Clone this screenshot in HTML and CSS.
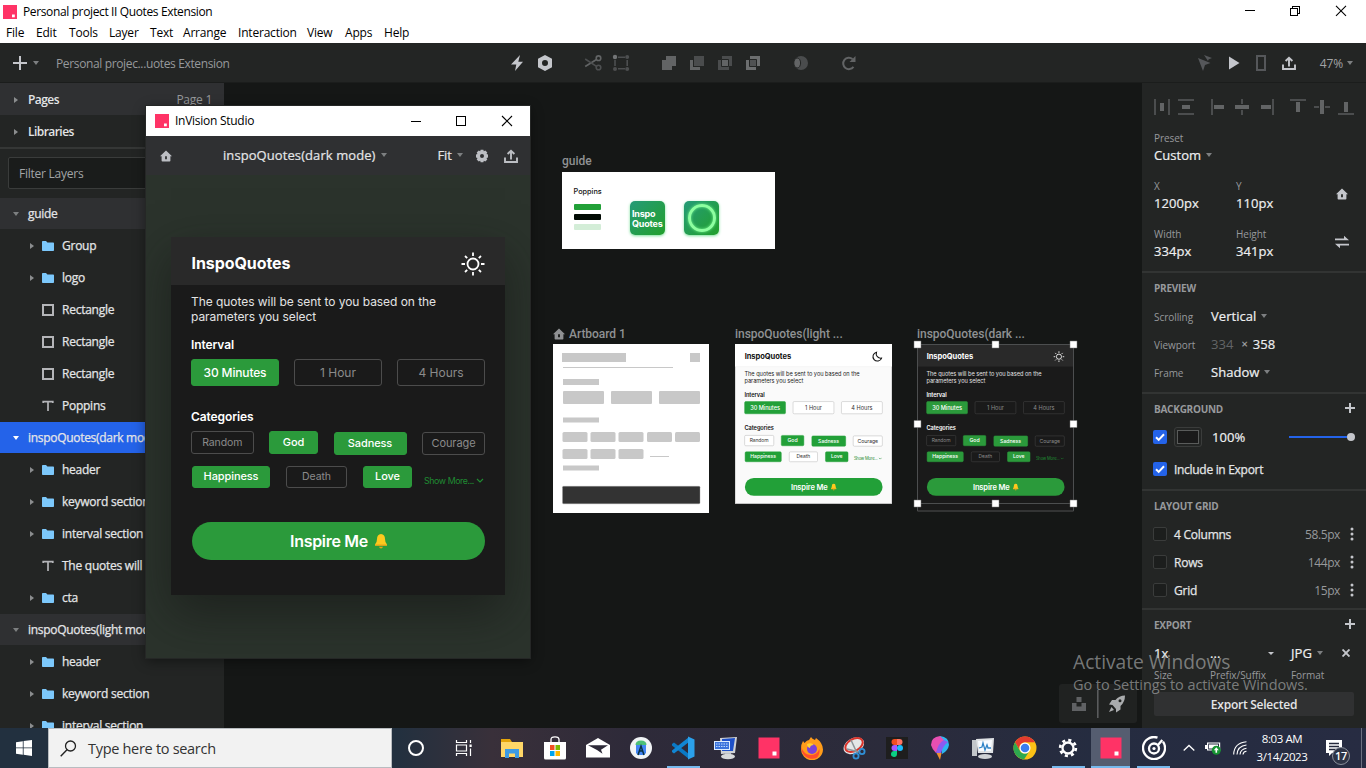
FILE: index.html
```html
<!DOCTYPE html>
<html lang="en">
<head>
<meta charset="utf-8">
<title>Personal project II Quotes Extension</title>
<link rel="stylesheet" href="styles.css">
</head>
<body>
<svg class="defs" aria-hidden="true">
  <defs>
    <symbol id="folder" viewBox="0 0 12 10"><path fill="#7cc8fb" d="M0 .8Q0 0 .8 0H4l1.4 1.5H11.200q.8 0 .8.8V9.200q0 .8-.8.8H.8Q0 10 0 9.200z"/></symbol>
    <symbol id="rect" viewBox="0 0 12 12"><rect x="1" y="1" width="10" height="10" fill="none" stroke="#b4b5b8" stroke-width="2"/></symbol>
    <symbol id="type" viewBox="0 0 12 12"><path fill="none" stroke="#b4b5b8" stroke-width="1.700" d="M1.200 3V1.700h9.600V3M6 2v9"/></symbol>
    <symbol id="home" viewBox="0 0 12 12"><path fill="currentColor" fill-rule="evenodd" d="M6 .4 12 6.200h-1.600v4.600q0 .8-.8.8H2.400q-.8 0-.8-.8V6.200H0zM5.100 6.300v2.900h1.800V6.300z"/></symbol>
    <symbol id="share" viewBox="0 0 14 14"><path fill="none" stroke="currentColor" stroke-width="1.900" d="M1 8.500V13h12V8.500M7 10.500V2M3.600 5 7 1.700 10.400 5"/></symbol>
    <symbol id="plus" viewBox="0 0 10 10"><path stroke="currentColor" stroke-width="2" d="M5 0v10M0 5h10"/></symbol>
    <symbol id="plus-lg" viewBox="0 0 14 14"><path stroke="currentColor" stroke-width="2" d="M7 0v14M0 7h14"/></symbol>
    <symbol id="logo" viewBox="0 0 14 14"><path fill="#ff3366" d="M0 0h14v14H0z"/><path fill="#fff" d="M9 9.500h2.800v2.800H9z"/></symbol>
    <symbol id="check" viewBox="0 0 14 14"><path fill="none" stroke="#fff" stroke-width="2" d="m3 7.200 2.700 2.700L11 4.300"/></symbol>
    <symbol id="dots" viewBox="0 0 4 14"><circle cx="2" cy="2" r="1.500"/><circle cx="2" cy="7" r="1.500"/><circle cx="2" cy="12" r="1.500"/></symbol>
    <symbol id="sun" viewBox="0 0 24 24"><g fill="none" stroke="currentColor" stroke-width="1.800"><circle cx="12" cy="12" r="5.500"/><path d="M12 .5v3.500M12 20v3.500M.5 12H4M20 12h3.500M4 4l2.200 2.200M17.800 17.800 20 20M4 20l2.200-2.200M17.800 6.200 20 4"/></g></symbol>
    <symbol id="moon" viewBox="0 0 24 24"><path fill="none" stroke="currentColor" stroke-width="2.300" d="M11 2.500A9.500 9.500 0 1 0 22 15 9.600 9.600 0 0 1 11 2.500z"/></symbol>
    <symbol id="bell" viewBox="0 0 12 15"><path fill="#fdc91e" d="M6 0q4 .3 4 5 0 3.500 2 5.500v1H0v-1Q2 8.500 2 5q0-4.700 4-5z"/><path fill="#e8a317" d="M0 10.500h12v1.300H0zM4 12.700h4q-.5 1.800-2 1.800t-2-1.800z"/></symbol>
    <symbol id="chev" viewBox="0 0 8 5"><path fill="none" stroke="currentColor" stroke-width="1.200" d="m1 1 3 3 3-3"/></symbol>
  </defs>
</svg>

<header class="titlebar">
  <div class="title"><svg class="app-logo"><use href="#logo"/></svg><span>Personal project II Quotes Extension</span>
    <svg class="win-ctl" viewBox="0 0 110 12" width="110" height="12"><g fill="none" stroke="#000" shape-rendering="crispEdges"><path d="M2 5.500h10M47.500 3.500h7v7h-7zM49.500 3.500v-2h7v7h-2"/></g><path stroke="#000" stroke-width="1.100" d="m93 .8 10 10M103 .8l-10 10"/></svg>
  </div>
  <nav class="menu"><span>File</span><span>Edit</span><span>Tools</span><span>Layer</span><span>Text</span><span>Arrange</span><span>Interaction</span><span>View</span><span>Apps</span><span>Help</span></nav>
</header>

<div class="toolbar">
  <div class="tb-left"><svg class="tb-plus"><use href="#plus-lg"/></svg><i class="caret"></i><span class="docname">Personal projec...uotes Extension</span></div>
  <svg class="tb-mid" viewBox="0 0 350 20" width="350" height="20">
    <path fill="#c4c6cb" d="M10 2 1 11.500h5.300L5 18l8-9.300H8.300z"/>
    <path fill="#c4c6cb" fill-rule="evenodd" d="m35 2 7 3.800v8.400L35 18l-7-3.800V5.800zm0 5a3 3 0 1 0 0 6 3 3 0 0 0 0-6z"/>
    <g fill="none" stroke="#626465" stroke-width="1.600"><circle cx="88.500" cy="5.200" r="2.300"/><circle cx="88.500" cy="14.500" r="2.300" stroke="#4d4f50"/><path d="m86.500 6.500-11.300 7"/><path stroke="#4d4f50" d="M86.500 13.300 75.200 6"/></g>
    <g fill="#4d4f50"><path d="M108 3.500h7v1.600h-7zM108 15h7v1.600h-7zM104.200 7h1.600v6h-1.600zM116.400 7h1.600v6h-1.600z"/><circle cx="117.200" cy="4" r="2"/><circle cx="105" cy="16" r="2"/><circle cx="117.200" cy="16" r="2"/><circle cx="105" cy="4" r="2.200" fill="#737577"/></g>
    <path fill="#626465" d="M156 3h10v10h-4v4h-10V7h4z"/>
    <path fill="#4a4c4d" d="M184 3h10v10h-10z"/><path fill="#626465" d="M180 7h3v7h7v3h-10z"/>
    <path fill="#4a4c4d" d="M212 3h10v10h-3v4h-11V7h4z"/><path fill="#626465" stroke="#232524" d="M211.500 6.500h7v7h-7z"/>
    <path fill="#6c6e6f" d="M240 3h10v10h-4v4h-10V7h4z"/><path fill="#505253" stroke="#232524" d="M239.500 6.500h7v7h-7z"/>
    <circle cx="291" cy="10" r="7" fill="#4a4c4d"/><ellipse cx="287.200" cy="10" rx="3.400" ry="5" fill="#626465" stroke="#232524"/>
    <path fill="none" stroke="#626465" stroke-width="2" d="M342.500 6A5.700 5.700 0 1 0 343.500 13.800"/><path fill="#626465" d="M345.500 3v6h-6z"/>
  </svg>
  <div class="tb-right">
    <svg viewBox="0 0 100 18" width="100" height="18"><path fill="#55575a" d="m0 4 12.500 5-5.500 2-2 6zM6 1l8 3-3.500 1.500L10 7z"/><path fill="#c4c6cb" d="M31 2.500 41.500 9 31 15.500z"/><path fill="none" stroke="#55575a" stroke-width="2" d="M59 2h8v14h-8z"/></svg>
    <svg class="tb-share"><use href="#share"/></svg>
    <span class="zoom">47%</span><i class="caret"></i>
  </div>
</div>

<main class="work">
  <aside class="layers">
    <div class="acc acc-on"><i class="tri"></i><b>Pages</b><span class="pg">Page 1</span></div>
    <div class="acc"><i class="tri"></i><b>Libraries</b></div>
    <div class="filter"><div class="filter-in">Filter Layers</div></div>
    <div class="row sec"><i class="caret"></i><span>guide</span></div>
    <div class="row"><i class="tri"></i><svg class="fo"><use href="#folder"/></svg><span>Group</span></div>
    <div class="row"><i class="tri"></i><svg class="fo"><use href="#folder"/></svg><span>logo</span></div>
    <div class="row leaf"><svg class="sq"><use href="#rect"/></svg><span>Rectangle</span></div>
    <div class="row leaf"><svg class="sq"><use href="#rect"/></svg><span>Rectangle</span></div>
    <div class="row leaf"><svg class="sq"><use href="#rect"/></svg><span>Rectangle</span></div>
    <div class="row leaf"><svg class="sq"><use href="#type"/></svg><span>Poppins</span></div>
    <div class="row sec selected"><i class="caret"></i><span>inspoQuotes(dark mode)</span></div>
    <div class="row"><i class="tri"></i><svg class="fo"><use href="#folder"/></svg><span>header</span></div>
    <div class="row"><i class="tri"></i><svg class="fo"><use href="#folder"/></svg><span>keyword section</span></div>
    <div class="row"><i class="tri"></i><svg class="fo"><use href="#folder"/></svg><span>interval section</span></div>
    <div class="row leaf"><svg class="sq"><use href="#type"/></svg><span>The quotes will be sent</span></div>
    <div class="row"><i class="tri"></i><svg class="fo"><use href="#folder"/></svg><span>cta</span></div>
    <div class="row sec"><i class="caret"></i><span>inspoQuotes(light mode)</span></div>
    <div class="row"><i class="tri"></i><svg class="fo"><use href="#folder"/></svg><span>header</span></div>
    <div class="row"><i class="tri"></i><svg class="fo"><use href="#folder"/></svg><span>keyword section</span></div>
    <div class="row"><i class="tri"></i><svg class="fo"><use href="#folder"/></svg><span>interval section</span></div>
  </aside>

  <section class="canvas">
    <div class="board b-guide"><div class="blabel">guide</div>
      <div class="guide">
        <div class="swatches"><span>Poppins</span><i class="s1"></i><i class="s2"></i><i class="s3"></i></div>
        <div class="tile">Inspo<br>Quotes</div>
        <div class="tile ring"><i></i></div>
      </div>
    </div>
    <div class="board b-wire"><div class="blabel"><svg class="bhome"><use href="#home"/></svg>Artboard 1</div>
      <svg viewBox="0 0 156 169" width="156" height="169"><path fill="#fff" d="M0 0h156v169H0z"/>
        <g fill="#c8c8c8"><path d="M9 9h64v9H9zM137 9h10v9h-10zM10 23h110v1H10zM10 35h36v6H10zM10 73.500h36v5H10zM10 121.500h36v5H10zM97 112h19v1H97z"/>
        <rect x="10" y="47" width="41" height="13" rx="1"/><rect x="58" y="47" width="41" height="13" rx="1"/><rect x="106" y="47" width="41" height="13" rx="1"/>
        <rect x="9.500" y="88" width="25" height="10" rx="1.500"/><rect x="37.500" y="88" width="25" height="10" rx="1.500"/><rect x="65.500" y="88" width="25" height="10" rx="1.500"/><rect x="94" y="88" width="25" height="10" rx="1.500"/><rect x="122" y="88" width="25" height="10" rx="1.500"/>
        <rect x="9.500" y="105" width="25" height="10" rx="1.500"/><rect x="37.500" y="105" width="25" height="10" rx="1.500"/><rect x="65.500" y="105" width="25" height="10" rx="1.500"/></g>
        <rect x="9.500" y="142.300" width="137.500" height="17.500" rx="1" fill="#333" stroke="#999" stroke-width=".4"/></svg>
    </div>
    <div class="board b-light"><div class="blabel">inspoQuotes(light ...</div>
      <div class="mini"><div class="card light">
        <div class="c-head"><span>InspoQuotes</span><svg class="c-mode"><use href="#moon"/></svg></div>
        <p class="c-text">The quotes will be sent to you based on the<br>parameters you select</p>
        <h4 class="c-h">Interval</h4>
        <div class="c-int"><span class="on">30 Minutes</span><span>1 Hour</span><span>4 Hours</span></div>
        <h4 class="c-h c-h2">Categories</h4>
        <div class="c-row"><span class="w62 sm">Random</span><span class="on w49">God</span><span class="on w73 dn">Sadness</span><span class="w63 dn">Courage</span></div>
        <div class="c-row c-row2"><span class="on w78">Happiness</span><span class="w61 sm">Death</span><span class="on w49">Love</span><em>Show More... <svg><use href="#chev"/></svg></em></div>
        <div class="c-cta">Inspire Me <svg><use href="#bell"/></svg></div>
      </div></div>
    </div>
    <div class="board b-dark"><div class="blabel">inspoQuotes(dark ...</div>
      <div class="mini"><div class="card">
        <div class="c-head"><span>InspoQuotes</span><svg class="c-mode"><use href="#sun"/></svg></div>
        <p class="c-text">The quotes will be sent to you based on the<br>parameters you select</p>
        <h4 class="c-h">Interval</h4>
        <div class="c-int"><span class="on">30 Minutes</span><span>1 Hour</span><span>4 Hours</span></div>
        <h4 class="c-h c-h2">Categories</h4>
        <div class="c-row"><span class="w62 sm">Random</span><span class="on w49">God</span><span class="on w73 dn">Sadness</span><span class="w63 dn">Courage</span></div>
        <div class="c-row c-row2"><span class="on w78">Happiness</span><span class="w61 sm">Death</span><span class="on w49">Love</span><em>Show More... <svg><use href="#chev"/></svg></em></div>
        <div class="c-cta">Inspire Me <svg><use href="#bell"/></svg></div>
      </div></div>
      <svg class="handles" viewBox="0 0 166 176" width="166" height="176"><path fill="none" stroke="#4c4e4f" d="M4.500 4.500h156v159h-156zM4.500 163v8h156v-8"/><g fill="#fff" stroke="#777" stroke-width=".5"><path d="M1 1h7v7H1zM79 1h7v7H79zM157 1h7v7H157zM1 80.500h7v7H1zM157 80.500h7v7H157zM1 160h7v7H1zM79 160h7v7H79zM157 160h7v7H157z"/></g></svg>
    </div>
    <div class="dock"><svg viewBox="0 0 78 39" width="78" height="39"><path fill="#606264" d="M17.500 13h5v5h-5zM13 19h4.500v3.500h5V19H27v8H13z"/><path fill="#5a5c5d" d="M38 6h1.600v28H38z"/><path fill="#aaacae" fill-rule="evenodd" d="M66 11.500q-6 0-9.500 4.500h-3.500L50 20.500l3.500.5 3.500 4v3.500l4.500-3V22Q66 18 66 11.500zm-5 3.800a1.500 1.500 0 1 1 0 3 1.500 1.500 0 0 1 0-3zM52.500 23 50 28l5-2z"/></svg></div>
  </section>

  <aside class="props">
    <div class="grp g-pos">
      <svg class="align" viewBox="0 0 200 16" width="200" height="16"><g fill="#4b4d4e"><path d="M0 0h2v16H0zM14 0h2v16h-2zM24 0h16v2H24zM24 14h16v2H24zM57 0h2v16h-2zM87 0h2v5h-2zM87 11h2v5h-2zM118 0h2v16h-2zM136 0h16v2h-16zM160 7h5v2h-5zM171 7h5v2h-5zM184 14h16v2h-16z"/></g><g fill="#626465"><path d="M6 4h4v8H6zM28 6h8v4h-8zM60 6h10v4H60zM81 6h14v4H81zM107 6h10v4h-10zM142 3h4v10h-4zM166 1h4v14h-4zM190 3h4v10h-4z"/></g></svg>
      <label>Preset</label><div class="val">Custom<i class="caret"></i></div>
      <div class="pair p1"><div><label>X</label><div class="val">1200px</div></div><div><label>Y</label><div class="val">110px</div></div><svg class="p-home"><use href="#home"/></svg></div>
      <div class="pair p2"><div><label>Width</label><div class="val">334px</div></div><div><label>Height</label><div class="val">341px</div></div><svg class="p-swap" viewBox="0 0 14 14"><path fill="#c4c6cb" d="M0 3.500h9V.8L14 5.300H0zM14 10.500H5v2.700L0 8.700h14z"/></svg></div>
    </div>
    <div class="grp g-prev"><h3>PREVIEW</h3>
      <div class="kv"><label>Scrolling</label><div class="val">Vertical<i class="caret"></i></div></div>
      <div class="kv"><label>Viewport</label><div class="val"><span class="dim">334</span><span class="x">×</span>358</div></div>
      <div class="kv"><label>Frame</label><div class="val">Shadow<i class="caret"></i></div></div>
    </div>
    <div class="grp g-bg"><h3>BACKGROUND<svg class="h-plus"><use href="#plus"/></svg></h3>
      <div class="bg1"><span class="cb on"><svg><use href="#check"/></svg></span><span class="well"><i></i></span><span class="val">100%</span><span class="slider"><i></i></span></div>
      <div class="bg2"><span class="cb on"><svg><use href="#check"/></svg></span><span class="opt inc">Include in Export</span></div>
    </div>
    <div class="grp g-grid"><h3>LAYOUT GRID</h3>
      <div class="lg"><span class="cb"></span><span class="opt">4 Columns</span><span class="num">58.5px</span><svg class="dots"><use href="#dots"/></svg></div>
      <div class="lg"><span class="cb"></span><span class="opt">Rows</span><span class="num">144px</span><svg class="dots"><use href="#dots"/></svg></div>
      <div class="lg"><span class="cb"></span><span class="opt">Grid</span><span class="num">15px</span><svg class="dots"><use href="#dots"/></svg></div>
    </div>
    <div class="grp g-exp"><h3>EXPORT<svg class="h-plus"><use href="#plus"/></svg></h3>
      <div class="ex val"><span>1x</span><span>...</span><i class="caret sm-c"></i><span>JPG<i class="caret"></i></span><svg viewBox="0 0 8 8" width="8" height="8"><path stroke="#c4c6cb" stroke-width="1.900" d="m.5.5 7 7m0-7-7 7"/></svg></div>
      <div class="exl"><label>Size</label><label>Prefix/Suffix</label><label>Format</label></div>
      <div class="btn">Export Selected</div>
    </div>
  </aside>
</main>

<div class="watermark"><div>Activate Windows</div><p>Go to Settings to activate Windows.</p></div>

<div class="popup">
  <div class="pop-title"><svg class="app-logo"><use href="#logo"/></svg><span>InVision Studio</span>
    <svg class="win-ctl" viewBox="0 0 102 12" width="102" height="12"><path fill="none" stroke="#000" shape-rendering="crispEdges" d="M0 6.500h10M45.500 1.500h9v9h-9z"/><path stroke="#000" stroke-width="1.100" d="m91 1 10 10M101 1 91 11"/></svg></div>
  <div class="pop-bar"><svg class="pb-home"><use href="#home"/></svg><span class="pb-name">inspoQuotes(dark mode)<i class="caret"></i></span><span class="pb-fit">Fit<i class="caret"></i></span>
    <svg class="pb-gear" viewBox="0 0 14 14"><path fill="#bcbec3" fill-rule="evenodd" d="M5.600.8h2.800l.4 1.500 1.500-.8 2 2-.8 1.500 1.500.5v2.900l-1.500.5.8 1.500-2 2-1.500-.7-.4 1.500H5.600l-.4-1.500-1.500.7-2-2 .8-1.500L1 8.400V5.500L2.500 5l-.8-1.500 2-2 1.500.8zM7 5a2 2 0 1 0 0 4 2 2 0 0 0 0-4z"/></svg>
    <svg class="pb-share"><use href="#share"/></svg></div>
  <div class="pop-body"><div class="card shadow">
    <div class="c-head"><span>InspoQuotes</span><svg class="c-mode"><use href="#sun"/></svg></div>
    <p class="c-text">The quotes will be sent to you based on the<br>parameters you select</p>
    <h4 class="c-h">Interval</h4>
    <div class="c-int"><span class="on">30 Minutes</span><span>1 Hour</span><span>4 Hours</span></div>
    <h4 class="c-h c-h2">Categories</h4>
    <div class="c-row"><span class="w62 sm">Random</span><span class="on w49">God</span><span class="on w73 dn">Sadness</span><span class="w63 dn">Courage</span></div>
    <div class="c-row c-row2"><span class="on w78">Happiness</span><span class="w61 sm">Death</span><span class="on w49">Love</span><em>Show More... <svg><use href="#chev"/></svg></em></div>
    <div class="c-cta">Inspire Me <svg><use href="#bell"/></svg></div>
  </div></div>
</div>

<footer class="taskbar">
  <div class="start"><svg viewBox="0 0 16 16" width="16" height="16"><path fill="#fff" d="M0 2.200 6.800 1.200v6.300H0zM7.600 1.100 16 0v7.500H7.600zM0 8.300h6.800v6.400L0 13.800zM7.600 8.300H16V16l-8.400-1.200z"/></svg></div>
  <div class="search"><svg viewBox="0 0 17 17" width="17" height="17"><circle cx="10.500" cy="6" r="5" fill="none" stroke="#222" stroke-width="1.300"/><path stroke="#222" stroke-width="1.400" d="M7 9.700.7 16.200"/></svg><span>Type here to search</span></div>
  <div class="sys"><svg viewBox="0 0 18 18" width="18" height="18"><circle cx="9" cy="9" r="7" fill="none" stroke="#fff" stroke-width="2"/></svg></div>
  <div class="sys"><svg viewBox="0 0 18 16" width="18" height="16"><g fill="none" stroke="#fff" stroke-width="1.200"><path d="M1.500 0v2.500h10V0M1.500 5h10v6h-10zM1.500 16v-2.500h10V16M15.500 0v3M15.500 8.500V16"/></g><path fill="#fff" d="M14.500 4.500h2.200v2.500h-2.200z"/></svg></div>
  <div class="apps">
    <div><svg viewBox="0 0 24 24"><path fill="#e5a50a" d="M1 3h9l2 3h11v14H1z"/><path fill="#ffd767" d="M1 6h22v15H1z"/><path fill="#3d9be3" d="M5 13h14v9h-4v-4.500H9V22H5z"/></svg></div>
    <div><svg viewBox="0 0 24 24"><path fill="none" stroke="#fff" stroke-width="1.300" d="M8 6V3.500Q8 .8 12 .8t4 2.700V6"/><path fill="#fff" d="M1 6h22v16q0 1.500-1.500 1.500h-19Q1 23.500 1 22z"/><path fill="#f25022" d="M7 9h4.500v5H7z"/><path fill="#7fba00" d="M12.500 9H17v5h-4.500z"/><path fill="#00a4ef" d="M7 15h4.500v5H7z"/><path fill="#ffb900" d="M12.500 15H17v5h-4.500z"/></svg></div>
    <div><svg viewBox="0 0 24 24"><path fill="#fff" d="M0 9 12 2l12 7v12.500H0z"/><path fill="#2d2a38" d="M2 9.300h20l-7 4.500 1.500 4L11 14z"/></svg></div>
    <div><svg viewBox="0 0 24 24"><circle cx="12" cy="12" r="11" fill="#f1f4f6"/><path fill="#4285f4" d="M7 9h10v8l-2 2H9l-2-2z"/><path fill="#4cbf78" d="M6.500 9q0-4.500 5.500-4.500T17.500 9z"/><path fill="none" stroke="#073042" stroke-width="1.500" d="m9 19 3-9 3 9M10 15h4"/></svg></div>
    <div class="run"><svg viewBox="0 0 24 24"><path fill="#0a79c4" d="m1 8 2-1.500L18 18v5L1 9.500z"/><path fill="#1186d3" d="m1 16 2 1.500L18 6V1L1 14.500z"/><path fill="#2ba0ea" d="m17 .5 6.500 3v17l-6.500 3z"/></svg></div>
    <div><svg viewBox="0 0 24 24"><path fill="#cfd2d6" d="m6 2 17-1-2 16-14 1z"/><path fill="#1e50c8" d="m8 3 13-1-2 13H8z"/><path fill="#dcecff" d="M0 5h16v9H0z"/><path fill="#3a73dc" d="M1 6h14v7H1z"/><path stroke="#bcd8ff" d="M2 8h12M2 10.500h12" stroke-dasharray="1.500 1"/><path fill="#b9bdc2" d="M11 17h6v3h-6z"/><ellipse cx="14" cy="20.500" rx="7" ry="2.800" fill="#d7d9db"/></svg></div>
    <div><svg viewBox="0 0 24 24"><path fill="#ff3366" d="M1.500 1.500h21v21h-21z"/><path fill="#fff" d="M15.500 15.500h4v4h-4z"/></svg></div>
    <div><svg viewBox="0 0 24 24"><path fill="#ff9c1a" d="M3 5l1.500 2Q7 4 9 4l2-3q1 2 4 3l1-2q7 5 7 11.500A11 11 0 0 1 1 13Q1 8 3 5z"/><path fill="#ff4d2e" d="M1.300 11q2 7 9 8 7 0 9-6 1 6-3 9A11 11 0 0 1 1.300 11z"/><circle cx="12" cy="13" r="5" fill="#7b42d8"/><path fill="#ffcf33" d="M7 8q4-2 7 1-4 0-4 3-3-1-3-4z"/></svg></div>
    <div><svg viewBox="0 0 24 24"><ellipse cx="11.500" cy="9.500" rx="11" ry="7.500" transform="rotate(-30 12 9)" fill="#e4e6e8"/><ellipse cx="12" cy="9" rx="9.500" ry="6" transform="rotate(-30 12 9)" fill="none" stroke="#d9342b" stroke-width="2"/><path stroke="#8d9499" stroke-width="1.500" d="m9 4 6 13M5 13l12 3"/><g fill="none" stroke="#2f8fd6" stroke-width="1.800"><circle cx="14" cy="20" r="2.600"/><circle cx="20" cy="15.500" r="2.600"/></g></svg></div>
    <div><svg viewBox="0 0 24 24"><path fill="#1e1e1e" d="M1 1h22v22H1z"/><path fill="#f24e1e" d="M12 3H9.500a3 3 0 0 0 0 6H12z"/><path fill="#ff7262" d="M12 3h2.500a3 3 0 0 1 0 6H12z"/><path fill="#a259ff" d="M12 9H9.500a3 3 0 0 0 0 6H12z"/><circle cx="15" cy="12" r="3" fill="#1abcfe"/><path fill="#0acf83" d="M12 15H9.500a3 3 0 1 0 2.500 3z"/></svg></div>
    <div><svg viewBox="0 0 24 24"><path fill="#2eb6f0" d="M12 0q9 1 9 9-1 6-7 9z"/><path fill="#e74fb2" d="M12 0Q3 1 3 9q1 4 5 8l8-13z"/><path fill="#8b5cf0" d="M16 4q-6 3-8 13l5 1q1-7 7-12z"/><path fill="#ef8f2f" d="M8.500 17h5L12 24z"/></svg></div>
    <div><svg viewBox="0 0 24 24"><path fill="#c2c6ca" d="M1 4h5v16H1z"/><path fill="#dfe2e5" d="m5 3 18-1-1 15H7z"/><path fill="#f8fbff" d="m7 5 14-1-1 11H8z"/><path fill="none" stroke="#2f83c7" stroke-width="1.300" d="m8 12 3-1 1-4 2 7 2-5 1 3h3"/><ellipse cx="14" cy="20.500" rx="7" ry="2.500" fill="#cfd2d6"/></svg></div>
    <div><svg viewBox="0 0 24 24"><circle cx="12" cy="12" r="11.500" fill="#fbc116"/><path fill="#e33b2e" d="M2 6.300A11.500 11.500 0 0 1 22 6.300H12a5.700 5.700 0 0 0-5 8.500z"/><path fill="#2da94f" d="M2 6.300a11.500 11.500 0 0 0 9 17.200l5.500-8.500a5.500 5.500 0 0 1-9.500 0z"/><circle cx="12" cy="12" r="5.500" fill="#fff"/><circle cx="12" cy="12" r="4.300" fill="#3b7ded"/></svg></div>
    <div class="run"><svg viewBox="0 0 24 24"><circle cx="12" cy="12" r="5.500" fill="none" stroke="#fff" stroke-width="2.300"/><circle cx="12" cy="12" r="7.800" fill="none" stroke="#fff" stroke-width="2.800" stroke-dasharray="3.063 3.063"/></svg></div>
    <div class="run active"><svg viewBox="0 0 24 24"><path fill="#ff3366" d="M1.500 1.500h21v21h-21z"/><path fill="#fff" d="M15.500 15.500h4v4h-4z"/></svg></div>
    <div class="run"><svg viewBox="0 0 24 24"><g fill="none" stroke="#fff"><path stroke-width="2.300" d="M15.500 1.600A11 11 0 1 0 21 5.700"/><circle cx="12" cy="12.500" r="5" stroke-width="2.300"/><path stroke-width="2.300" d="m16 9 4.300-5"/></g><circle cx="12" cy="12.500" r="1.600" fill="#fff"/></svg></div>
  </div>
  <div class="tray">
    <svg viewBox="0 0 12 8" width="12" height="8"><path fill="none" stroke="#fff" stroke-width="1.300" d="m.7 6.500 5.300-5 5.300 5"/></svg>
    <svg class="bat" viewBox="0 0 16 13" width="16" height="13"><path fill="none" stroke="#fff" stroke-width="1.200" d="M2.600 1h12v7h-12z"/><path fill="#fff" d="M0 3h2v4H0zM4 2.500h9v4H4z"/><circle cx="11.300" cy="8.300" r="4.500" fill="#169432"/><path fill="#fff" d="m11.300 5.200 2.500 3h-1.700v2.500h-1.600V8.200H8.800z"/></svg>
    <svg viewBox="0 0 14 14" width="14" height="14"><g fill="none" stroke="#fff" stroke-width="1.100"><path d="M.7 13.500Q1 2 13.500.8M4 13.500Q4.500 5 13.500 4M7 13.500q.5-5.500 6.500-6.300M10 13.500q.3-3 3.500-3.300"/></g></svg>
    <div class="clock"><span>8:03 AM</span><span>3/14/2023</span></div>
    <div class="note"><svg viewBox="0 0 16 16" width="16" height="16"><path fill="#fff" d="M0 0h16v13H6l-3 3v-3H0z"/><path stroke="#262a3c" stroke-width="1.300" d="M3 3.500h10M3 6.500h10M3 9.500h7"/></svg><b>17</b></div>
    <i class="peek"></i>
  </div>
</footer>
</body>
</html>
```
FILE: styles.css
```css
*{box-sizing:border-box}
body{margin:0;width:1366px;height:768px;overflow:hidden;display:flex;flex-direction:column;position:relative;background:#151716;color:#e4e5e7;font:12px/16px "Open Sans","Noto Sans",sans-serif}
svg{display:block;flex:none}
.defs{position:absolute;width:0;height:0}
h3,h4,p{margin:0}
i{display:block;flex:none}
.caret{width:0;height:0;border:3.500px solid transparent;border-top:4px solid #7d7f81;border-bottom:0}
.tri{width:0;height:0;border:3.500px solid transparent;border-left:4px solid #8b8d8f;border-right:0}

.titlebar{height:43px;background:#fff;color:#000;flex:none}
.title{height:22px;display:flex;align-items:center;padding:1px 13px 0 3px;letter-spacing:-.37px}
.app-logo{width:14px;height:14px}
.title span{margin-left:6px}
.title .win-ctl{margin-left:auto;margin-top:-2px}
.menu{display:grid;grid-template-columns:30px 33px 40px 41px 33px 55px 69px 38px 39px auto;padding:3px 0 0 6px;letter-spacing:-.2px}

.toolbar{height:40px;flex:none;background:#232524;border-bottom:1px solid #1b1d1c;display:flex;align-items:center}
.tb-left{display:flex;align-items:center;width:510px;padding-left:13px}
.tb-plus{width:14px;height:14px;color:#c4c6cb}
.tb-left .caret{margin-left:6px}
.docname{margin-left:16px;padding:2px 0 0 1px;color:#97999c;letter-spacing:-.36px}
.tb-right{margin-left:auto;display:flex;align-items:center;padding-right:13px}
.tb-share{width:14px;height:14px;color:#c4c6cb;margin-left:-16px}
.zoom{margin:0 4px 0 24px;padding-top:2px;color:#a2a4a6;letter-spacing:-.1px}

.work{flex:1;min-height:0;display:flex}
.layers{width:224px;background:#232524;overflow:hidden;letter-spacing:-.25px}
.acc{height:32px;display:flex;align-items:center;padding:1px 12px 0 14px}
.acc-on{background:#2f3032}
.acc b{font-weight:600;margin-left:10px;letter-spacing:-.55px}
.acc .pg{margin-left:auto;color:#97999c}
.filter{height:51px;border-top:2px solid #353736;padding:8px}
.filter-in{height:32px;border:1px solid #3a3c3b;border-radius:2px;background:#1a1c1b;color:#a2a4a6;padding:8px 10px}
.row{height:31px;margin-bottom:1px;display:flex;align-items:center;white-space:nowrap;padding-left:30px;font-weight:500}
.row>span{-webkit-text-stroke:.25px}
.row .fo{width:12px;height:10px;margin:0 8px}
.row.leaf{padding-left:42px}
.row .sq{width:12px;height:12px;margin-right:8px}
.sec{background:#2f3032;padding-left:13px}
.sec>span{margin-left:8px;padding-left:1px;letter-spacing:-.3px}
.selected{background:#2463e9}
.selected .caret{border-top-color:#fff}

.canvas{flex:1;position:relative;background:#151716}
.board{position:absolute}
.blabel{height:12px;margin-bottom:5px;font:500 12px/12px Roboto,sans-serif;color:#8f9193;display:flex;white-space:nowrap;letter-spacing:-.04px}
.bhome{width:12px;height:12px;margin-right:4px}
.b-guide{left:338px;top:72px}
.b-wire{left:329px;top:245px}
.b-light{left:511px;top:245px}
.b-dark{left:693px;top:245px}
.b-wire .blabel,.b-light .blabel,.b-dark .blabel{margin-bottom:4px}
.guide{width:213px;height:77px;background:#fff;display:flex;padding:13px 0 0 11.500px;color:#111}
.swatches{width:56px;font:500 7.300px/12px Inter,sans-serif}
.swatches i{width:27px;height:6px;margin-bottom:4px;border-radius:1px}
.swatches span{display:block;padding-top:1px;margin-bottom:6px}
.s1{background:#22a038}.s2{background:#020b04}.s3{background:#d3edd7}
.tile{width:35px;height:34px;margin:16px 19px 0 0;border-radius:5px;background:linear-gradient(135deg,#259b77,#22a02c);box-shadow:0 1px 3px #7be09a;color:#fff;font:700 9px/9.500px Inter,sans-serif;padding:8px 0 0 2.500px;letter-spacing:-.2px}
.ring{padding:3px 0 0 4px}
.ring i{width:28px;height:28px;border-radius:50%;border:3px solid #8dffa0;box-shadow:0 0 3px #6cf08a,inset 0 0 3px #6cf08a}
.mini{width:157px;height:160px;overflow:hidden}
.b-dark .mini{height:168px}
.mini .card{transform:scale(.47);transform-origin:0 0}
.handles{position:absolute;left:-4px;top:12px}
.dock{position:absolute;left:835px;top:601px;width:78px;height:39px;border-radius:3px;background:#202221}

.card{width:334px;height:358px;background:#1a1a1a;color:#fff;font:400 12px/15px Inter,sans-serif}
.shadow{box-shadow:0 18px 45px rgba(18,20,18,.55)}
.c-head{height:48px;background:#292929;display:flex;align-items:center;justify-content:space-between;padding:5px 20px 0 20.500px;font-size:16px;font-weight:700;letter-spacing:-.08px}
.c-mode{width:24px;height:24px}
.c-text{margin:9px 20px 0;white-space:nowrap;color:#e3e3e3;letter-spacing:-.05px}
.c-h{margin:13px 20px 0;font-size:12px;line-height:15px;font-weight:600;letter-spacing:-.1px}
.c-h2{margin-top:23px}
.c-int{margin:7px 20px 0;display:flex;gap:15px}
.c-int span{width:88px;height:27px;border:1px solid #4c4c4c;border-radius:3px;color:#8b8b8b;display:flex;align-items:center;justify-content:center}
.c-int .on{letter-spacing:-.15px}
.c-row{display:flex;margin:7px 20px 0;gap:15.500px}
.c-row2{margin:12px 20px 0 21px;gap:16px}
.c-row span{flex:none;height:22.500px;border:1px solid #4c4c4c;border-radius:3px;color:#8b8b8b;display:flex;align-items:center;justify-content:center;font-size:11px;letter-spacing:-.1px}
.card .on{background:#2b9a3b;border-color:#2b9a3b;color:#fff;font-weight:500}
.c-row .sm{font-size:10.500px}
.c-row .dn{margin-top:1px;margin-bottom:-1px}
.w62{width:62.500px}.w49{width:49px}.w73{width:73px}.w63{width:63px}.w78{width:78px}.w61{width:61px}
.c-row em{font-style:normal;font-size:8.800px;letter-spacing:-.4px;color:#1f8b32;display:flex;align-items:center;white-space:nowrap;margin:7px 0 0 -4px}
.c-row em svg{width:8px;height:5px;margin-left:2px}
.c-cta{height:38px;margin:34px 20px 0 21px;border-radius:19px;background:#2b9a3b;display:flex;align-items:center;justify-content:center;font-size:16px;font-weight:600;letter-spacing:-.3px}
.c-cta svg{width:12px;height:15px;margin-left:7px}
.light{background:#fafafa;color:#111;height:340px;box-shadow:inset 0 0 0 1px #bbb}
.light .c-head{background:#fff;box-shadow:0 1px 3px #ccc}
.light .c-text{color:#222}
.light .c-int span,.light .c-row span{border-color:#b5b5b5;color:#333;background:#fff}
.light.card .on{background:#22a038;border-color:#22a038;color:#fff}
.light .c-cta{background:#22a038;color:#fff}

.props{width:224px;background:#232524;font-size:13px}
.props label{display:block;font-size:10px;line-height:12px;color:#97999c;letter-spacing:-.05px}
.props h3{font-size:10px;line-height:12px;font-weight:700;color:#97999c;letter-spacing:-.25px;display:flex;justify-content:space-between}
.grp{border-bottom:2px solid #323433;padding:0 12px}
.val{display:flex;align-items:center;font-size:13px;line-height:18px;font-weight:500;color:#eeeff0;letter-spacing:.05px;-webkit-text-stroke:.2px}
.val .caret{margin-left:5px}
.g-pos{height:190px;padding-top:16px}
.align{margin-bottom:17px}
.pair{display:grid;grid-template-columns:82px 1fr 14px;align-items:center;padding-right:5px}
.g-pos>.val,.pair .val{margin-top:2px}
.p1{margin-top:16px}
.p2{margin-top:16px}
.p-home{width:12px;height:12px;color:#c4c6cb;margin:-4px 0 0 1px}
.p-swap{width:14px;height:14px;margin-top:-4px}
.g-prev{height:121px;padding-top:9px}
.kv{display:grid;grid-template-columns:57px 1fr;height:28px;align-items:center}
.g-prev h3{margin-bottom:8px}
.kv label{padding-top:2px}
.dim{color:#626466;-webkit-text-stroke:0}
.x{font-size:11px;margin:0 5px 0 8px;color:#a2a4a6}
.g-bg{height:97px;padding-top:9px}
.h-plus{width:10px;height:10px;color:#c4c6cb;margin-right:-1px}
.bg1{display:flex;align-items:center;height:32px;margin:6px 0 0 -1px}
.bg2{display:flex;align-items:center;height:32px;margin-left:-1px}
.cb{width:14px;height:14px;border:1px solid #3a3c3b;border-radius:2px;background:#1c1e1d;flex:none}
.cb.on{background:#2463e9;border:0}
.cb svg{width:14px;height:14px}
.well{width:28px;height:20px;margin:0 10px 0 7px;border:1px solid #3a3c3b;border-radius:3px;padding:2px}
.well i{height:14px;border:1px solid #5a5c5b;background:#1a1a1a}
.slider{width:62px;height:2px;margin-left:auto;background:#2463e9;display:flex;justify-content:flex-end;align-items:center;margin-right:3px}
.slider i{width:8px;height:8px;border-radius:50%;background:#c4c6cb;margin-right:-4px}
.opt{font-size:12px;font-weight:500;margin-left:7px;padding-top:2px;letter-spacing:-.25px;-webkit-text-stroke:.25px}
.inc{letter-spacing:-.3px}
.g-grid{height:119px;padding-top:9px}
.g-grid h3{margin-bottom:8px}
.lg{display:flex;align-items:center;height:28px;margin-left:-1px}
.num{margin-left:auto;padding-top:2px;font-size:12px;color:#97999c;margin-right:10px;letter-spacing:-.4px}
.dots{width:4px;height:14px;fill:#c4c6cb}
.g-exp{border:0;padding-top:9px}
.ex{display:grid;grid-template-columns:56px 57.500px 23.500px 51px 8px;margin-top:13px}
.ex span{display:flex;align-items:center}
.sm-c{border-width:3.500px 3px 0;border-top-color:#c4c6cb;margin:0!important}
.exl{display:grid;grid-template-columns:56px 81px auto;margin-top:7px}
.btn{height:24px;margin-top:11px;background:#303132;border-radius:2px;text-align:center;font-size:12px;line-height:25px;font-weight:600;letter-spacing:-.25px}

.watermark{position:absolute;left:1073px;top:650px;color:rgba(180,182,182,.62);white-space:nowrap}
.watermark div{font-size:19.200px;line-height:24px;letter-spacing:0}
.watermark p{font-size:14.500px;line-height:20px;margin-top:1px;letter-spacing:-.08px}

.popup{position:absolute;left:146px;top:106px;width:384px;height:552px;background:#2b332c;display:flex;flex-direction:column;box-shadow:0 0 0 1px #252726,0 3px 12px rgba(0,0,0,.45)}
.pop-title{height:30px;background:#fff;color:#000;display:flex;align-items:center;padding:0 17px 0 9px;letter-spacing:-.27px}
.pop-title span{margin-left:6px}
.pop-title .win-ctl{margin-left:auto;margin-top:-1px}
.pop-bar{height:39px;background:#2f3032;display:flex;align-items:center;padding:0 12px 0 14px;font-size:13px}
.pop-bar span{display:flex;align-items:center;white-space:nowrap;margin-top:-1px;-webkit-text-stroke:.2px}
.pop-bar .caret{margin-left:5px}
.pb-home{width:12px;height:12px;color:#bcbec3}
.pb-name{margin-left:51px;letter-spacing:.08px}
.pb-fit{margin-left:auto;letter-spacing:0}
.pb-gear{width:14px;height:14px;margin:0 15px 0 12px}
.pb-share{width:14px;height:14px;color:#bcbec3}
.pop-body{flex:1;overflow:hidden;padding:62px 25px 0}

.taskbar{height:40px;flex:none;position:relative;display:flex;background:linear-gradient(90deg,#22303f 0,#22303f 29%,#39303a 36%,#2e2a39 46%,#2b2b3b 65%,#252c40 80%,#272c42);color:#fff}
.start{width:48px;padding:12px 0 0 16px}
.search{width:344px;background:#f2f2f2;border:1px solid #b8bcc0;color:#333;display:flex;align-items:center;padding-left:11px;font-size:14.500px;letter-spacing:-.3px}
.search span{margin-left:11px;padding-top:2px}
.sys{width:48px;display:flex;align-items:center;justify-content:center}
.apps{display:flex;margin-left:3px}
.apps>div{width:42.750px;display:flex;align-items:center;justify-content:center}
.apps svg{width:24px;height:24px}
.run{background:linear-gradient(#76b9ed,#76b9ed) center bottom/33px 2px no-repeat}
.active{background:linear-gradient(#76b9ed,#76b9ed) center bottom/39px 2px no-repeat,linear-gradient(#555d70,#555d70) center/39px 40px no-repeat}
.tray{display:flex;align-items:center;margin-left:8px;flex:1}
.bat{margin-left:10px}
.bat+svg{margin-left:12px}
.clock{display:flex;flex-direction:column;align-items:center;margin-left:8px;width:54px;font-size:11.500px;line-height:18px;letter-spacing:-.4px;white-space:nowrap}
.note{position:relative;margin-left:17px}
.note b{position:absolute;left:6px;top:7px;width:18px;height:18px;border-radius:50%;background:#2e3446;border:1px solid #8a8f9b;font-size:11px;line-height:16px;text-align:center;font-weight:600;letter-spacing:-.4px}
.peek{position:absolute;right:4px;top:0;width:1px;height:40px;background:#6c7080}
```
